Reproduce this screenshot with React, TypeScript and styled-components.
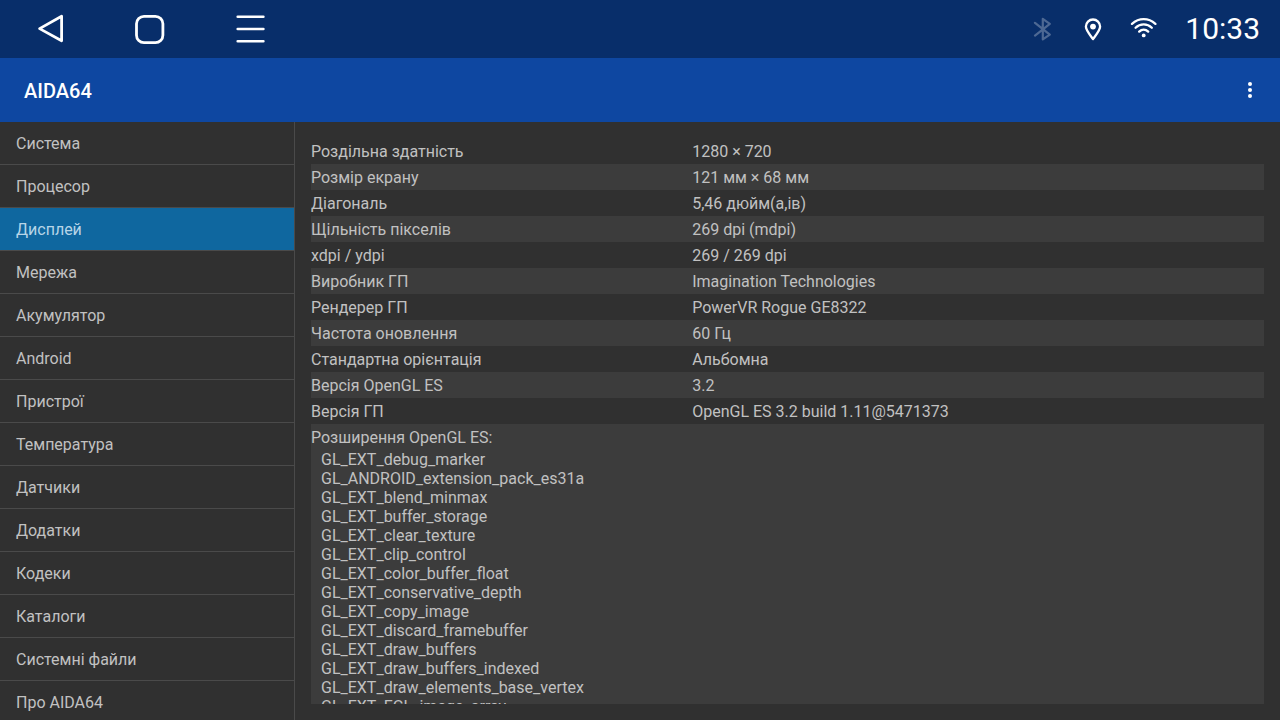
import React from "react";
import styled, { createGlobalStyle } from "styled-components";

const GlobalStyle = createGlobalStyle`
  *, *::before, *::after { box-sizing: border-box; }
  body {
    margin: 0;
    background: #303030;
    color: #c1c1c1;
    font-family: Roboto, "Noto Sans", sans-serif;
    font-size: 16px;
  }
`;

const Screen = styled.div`
  display: flex;
  flex-direction: column;
  height: 100vh;
  overflow: hidden;
`;

const StatusBar = styled.header`
  display: flex;
  flex: none;
  align-items: center;
  justify-content: space-between;
  height: 58px;
  padding: 0 20px 0 34px;
  background: #082e6a;
  color: #fff;
`;

const NavKeys = styled.nav`
  display: flex;
  gap: 68px;
`;

const IconButton = styled.button`
  display: flex;
  align-items: center;
  justify-content: center;
  width: 32px;
  height: 32px;
  padding: 0;
  border: 0;
  background: none;
  color: #fff;
  cursor: pointer;
`;

const StrokeIcon = styled.svg<{ $size: number; $dim?: boolean }>`
  display: block;
  flex: none;
  width: ${({ $size }) => $size}px;
  height: ${({ $size }) => $size}px;
  fill: none;
  stroke: currentColor;
  stroke-linecap: round;
  stroke-linejoin: round;
  opacity: ${({ $dim }) => ($dim ? 0.28 : 1)};
`;

const Indicators = styled.div`
  display: flex;
  align-items: center;
  gap: 22px;
`;

const Clock = styled.time`
  padding-left: 6px;
  font-size: 30px;
  line-height: 36px;
`;

const AppBar = styled.div`
  display: flex;
  flex: none;
  align-items: center;
  justify-content: space-between;
  height: 64px;
  padding: 0 14px 0 24px;
  background: #0e47a1;
  color: #fff;
`;

const Title = styled.h1`
  margin: 0;
  padding-top: 2px;
  font-size: 20px;
  font-weight: 500;
  line-height: 24px;
`;

const Body = styled.div`
  display: flex;
  flex: 1;
  min-height: 0;
`;

const Sidebar = styled.nav`
  flex: 0 0 24%;
  max-width: 295px;
  overflow-y: auto;
  scrollbar-width: none;
  border-right: 1px solid #4a4a4a;
`;

const SidebarLink = styled.a<{ $active?: boolean }>`
  display: block;
  padding: 2px 16px 0;
  border-bottom: 1px solid #4a4a4a;
  background: ${({ $active }) => ($active ? "#0f679f" : "transparent")};
  background-clip: padding-box;
  color: ${({ $active }) => ($active ? "#b7d5e7" : "inherit")};
  line-height: 40px;
  text-decoration: none;
`;

const Main = styled.main`
  display: flex;
  flex: 1;
  min-width: 0;
  padding: 16px;
`;

const Scroller = styled.div`
  flex: 1;
  overflow-y: auto;
  scrollbar-width: none;
`;

const InfoTable = styled.table`
  width: 100%;
  table-layout: fixed;
  border-collapse: collapse;
`;

const InfoRow = styled.tr`
  &:nth-child(even) {
    background: #3c3c3c;
  }
`;

const Label = styled.th`
  width: 40%;
  padding: 2px 0 0;
  font-weight: 400;
  line-height: 24px;
  text-align: left;
`;

const Value = styled.td`
  padding: 2px 0 0;
  line-height: 24px;
`;

const ExtensionList = styled.ul`
  margin: 0;
  padding: 0 0 0 10px;
  list-style: none;
  line-height: 19px;
`;

const sections = [
  "Система",
  "Процесор",
  "Дисплей",
  "Мережа",
  "Акумулятор",
  "Android",
  "Пристрої",
  "Температура",
  "Датчики",
  "Додатки",
  "Кодеки",
  "Каталоги",
  "Системні файли",
  "Про AIDA64",
];

const details: [string, string][] = [
  ["Роздільна здатність", "1280 × 720"],
  ["Розмір екрану", "121 мм × 68 мм"],
  ["Діагональ", "5,46 дюйм(а,ів)"],
  ["Щільність пікселів", "269 dpi (mdpi)"],
  ["xdpi / ydpi", "269 / 269 dpi"],
  ["Виробник ГП", "Imagination Technologies"],
  ["Рендерер ГП", "PowerVR Rogue GE8322"],
  ["Частота оновлення", "60 Гц"],
  ["Стандартна орієнтація", "Альбомна"],
  ["Версія OpenGL ES", "3.2"],
  ["Версія ГП", "OpenGL ES 3.2 build 1.11@5471373"],
];

const extensions = [
  "GL_EXT_debug_marker",
  "GL_ANDROID_extension_pack_es31a",
  "GL_EXT_blend_minmax",
  "GL_EXT_buffer_storage",
  "GL_EXT_clear_texture",
  "GL_EXT_clip_control",
  "GL_EXT_color_buffer_float",
  "GL_EXT_conservative_depth",
  "GL_EXT_copy_image",
  "GL_EXT_discard_framebuffer",
  "GL_EXT_draw_buffers",
  "GL_EXT_draw_buffers_indexed",
  "GL_EXT_draw_elements_base_vertex",
  "GL_EXT_EGL_image_array",
];

const BackIcon = () => (
  <StrokeIcon $size={32} viewBox="0 0 32 32" strokeWidth="2.8" aria-hidden="true">
    <path d="M5.6 15.6 27.6 3.2V27.8Z" />
  </StrokeIcon>
);

const HomeIcon = () => (
  <StrokeIcon $size={32} viewBox="0 0 32 32" strokeWidth="2.8" aria-hidden="true">
    <rect x="2.5" y="3.3" width="26.4" height="26.4" rx="7.5" />
  </StrokeIcon>
);

const RecentsIcon = () => (
  <StrokeIcon $size={32} viewBox="0 0 32 32" strokeWidth="2.6" aria-hidden="true">
    <path d="M3.7 3.8H29.4M3.7 16H29.4M3.7 28.2H29.4" />
  </StrokeIcon>
);

const BluetoothIcon = () => (
  <StrokeIcon $size={28} $dim viewBox="0 0 28 28" strokeWidth="2.2" aria-hidden="true">
    <path d="M6 7.8 20.8 19.6 13.8 24.4V3.8L20.8 8.8 6 20.6" />
  </StrokeIcon>
);

const LocationIcon = () => (
  <StrokeIcon $size={28} viewBox="0 0 28 28" strokeWidth="2.3" aria-hidden="true">
    <path d="M14 24C11.2 20 6.9 15.6 6.9 11.6A7.1 7.1 0 0 1 21.1 11.6C21.1 15.6 16.8 20 14 24Z" />
    <circle cx="14" cy="11.6" r="2.9" fill="currentColor" stroke="none" />
  </StrokeIcon>
);

const WifiIcon = () => (
  <StrokeIcon $size={28} viewBox="0 0 28 28" strokeWidth="2.3" aria-hidden="true">
    <path d="M3 8.9Q8.2 4.2 14.7 4.2T26.4 8.9M6.6 12.8Q10 9.4 14.7 9.4T22.8 12.8M10.2 16.6Q12.2 14.6 14.7 14.6T19.2 16.6" />
    <circle cx="14.7" cy="20.4" r="1.9" fill="currentColor" stroke="none" />
  </StrokeIcon>
);

const MoreIcon = () => (
  <StrokeIcon $size={24} viewBox="0 0 24 24" aria-hidden="true">
    <g fill="currentColor" stroke="none">
      <circle cx="12" cy="6" r="2" />
      <circle cx="12" cy="12" r="2" />
      <circle cx="12" cy="18" r="2" />
    </g>
  </StrokeIcon>
);

export default function App() {
  return (
    <Screen>
      <GlobalStyle />
      <StatusBar>
        <NavKeys>
          <IconButton type="button" aria-label="Назад">
            <BackIcon />
          </IconButton>
          <IconButton type="button" aria-label="Додому">
            <HomeIcon />
          </IconButton>
          <IconButton type="button" aria-label="Меню">
            <RecentsIcon />
          </IconButton>
        </NavKeys>
        <Indicators>
          <BluetoothIcon />
          <LocationIcon />
          <WifiIcon />
          <Clock>10:33</Clock>
        </Indicators>
      </StatusBar>
      <AppBar>
        <Title>AIDA64</Title>
        <IconButton type="button" aria-label="Інші опції">
          <MoreIcon />
        </IconButton>
      </AppBar>
      <Body>
        <Sidebar>
          {sections.map((name) => (
            <SidebarLink
              key={name}
              href="#"
              $active={name === "Дисплей"}
              aria-current={name === "Дисплей" ? "page" : undefined}
            >
              {name}
            </SidebarLink>
          ))}
        </Sidebar>
        <Main>
          <Scroller>
            <InfoTable>
              <tbody>
                {details.map(([label, value]) => (
                  <InfoRow key={label}>
                    <Label scope="row">{label}</Label>
                    <Value>{value}</Value>
                  </InfoRow>
                ))}
                <InfoRow>
                  <Value colSpan={2}>
                    Розширення OpenGL ES:
                    <ExtensionList>
                      {extensions.map((name) => (
                        <li key={name}>{name}</li>
                      ))}
                    </ExtensionList>
                  </Value>
                </InfoRow>
              </tbody>
            </InfoTable>
          </Scroller>
        </Main>
      </Body>
    </Screen>
  );
}
